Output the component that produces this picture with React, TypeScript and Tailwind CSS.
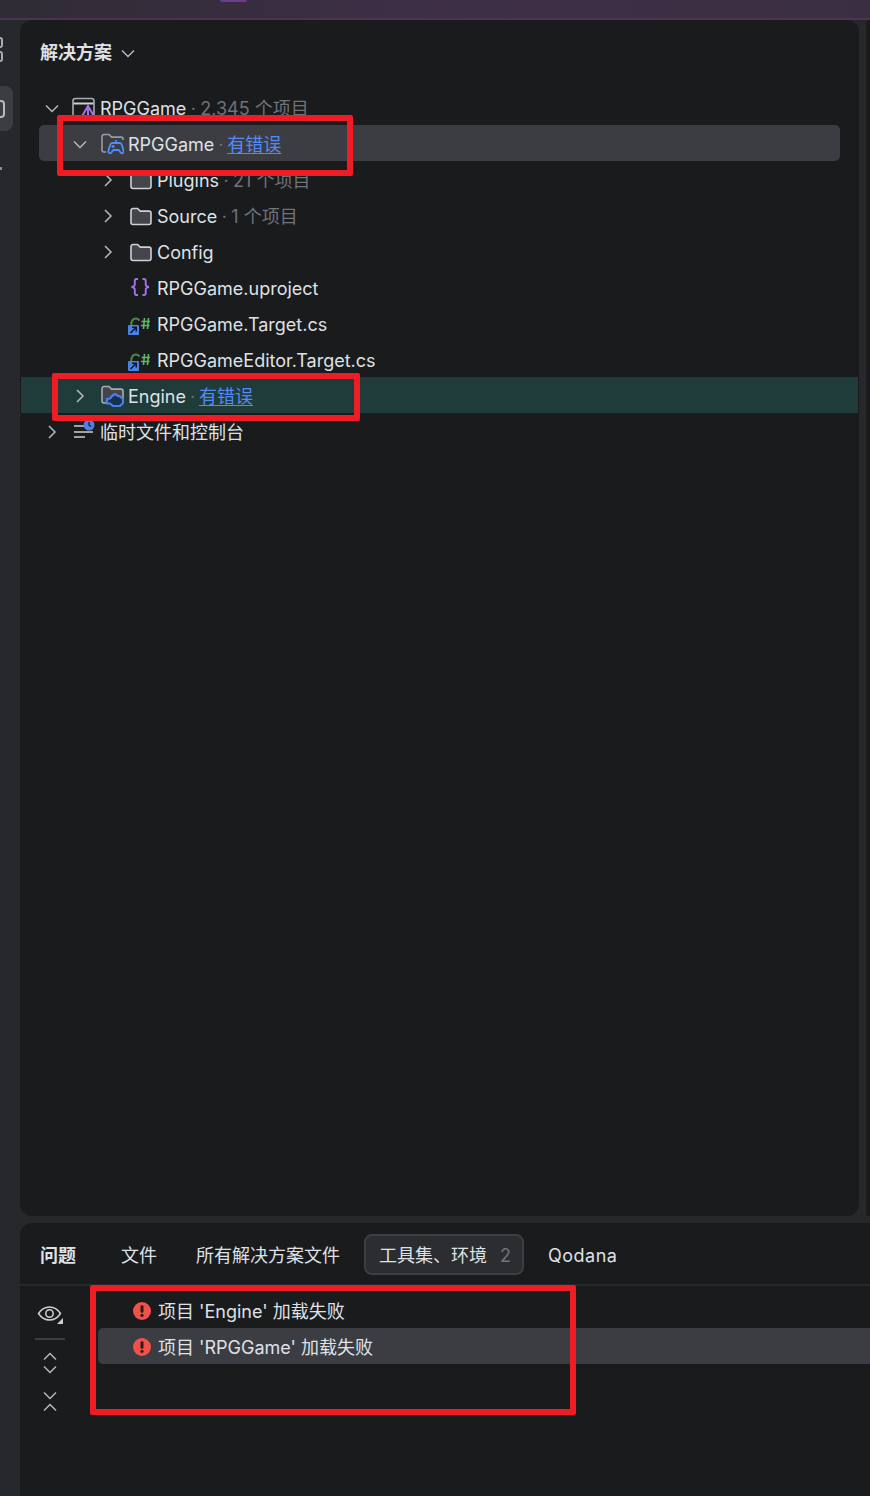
import React from "react";

const font = "font-['Inter','Noto_Sans_CJK_SC',sans-serif]";

const Chevron = ({ dir }: { dir: "down" | "right" | "up" }) => {
  const d = dir === "down" ? "M2 5.5l6 6 6-6" : dir === "up" ? "M2 10.5l6-6 6 6" : "M5 2l6 6-6 6";
  return (
    <svg width="16" height="16" viewBox="0 0 16 16" fill="none" stroke="#b4b8bf" strokeWidth="1.5" className="shrink-0">
      <path d={d} />
    </svg>
  );
};

const Folder = () => (
  <svg width="24" height="24" viewBox="0 0 24 24" fill="#43454a" stroke="#ced0d6" strokeWidth="1.6">
    <path d="M3 6.500a2 2 0 0 1 2-2h4.600l2.600 2.600H21a2 2 0 0 1 2 2v9.400a2 2 0 0 1-2 2H5a2 2 0 0 1-2-2z" />
  </svg>
);

const SolutionIcon = () => (
  <svg width="24" height="24" viewBox="0 0 24 24" fill="none">
    <rect x="1" y="2.500" width="21" height="19" rx="2.500" stroke="#a8abb2" strokeWidth="1.600" />
    <path d="M1.500 7.500h20" stroke="#ced0d6" strokeWidth="2" />
    <path d="M9 22l7-12 7 12M16 11v11" fill="#1a1b1d" stroke="#a571e6" strokeWidth="2" />
  </svg>
);

const GameFolder = () => (
  <svg width="24" height="24" viewBox="0 0 24 24" fill="none">
    <path d="M6 20H4a2 2 0 0 1-2-2V4.500a2 2 0 0 1 2-2h5l2.600 2.600H21a2 2 0 0 1 2 2V8" stroke="#9a9da4" strokeWidth="1.600" />
    <path
      d="M12.500 11h7a2.500 2.500 0 0 1 2.400 1.900l1.800 6.300c.4 1.700-1.700 2.700-2.900 1.400L18.500 18h-5l-2.300 2.600c-1.200 1.300-3.300.3-2.900-1.400l1.800-6.300A2.500 2.500 0 0 1 12.500 11zM16 8v3"
      fill="#3c3d43"
      stroke="#4f8cff"
      strokeWidth="1.800"
    />
    <path d="M11.500 14.500h3M13 13v3M19 13.500v.1M18 15.500v.1" stroke="#4f8cff" strokeWidth="1.400" />
  </svg>
);

const EngineFolder = () => (
  <svg width="24" height="24" viewBox="0 0 24 24" fill="none">
    <path d="M4 2.500h5l2.600 2.600H21a2 2 0 0 1 2 2V17a2 2 0 0 1-2 2H4a2 2 0 0 1-2-2V4.500a2 2 0 0 1 2-2z" fill="#43454a" stroke="#a8abb2" strokeWidth="1.600" />
    <path d="M12 12l3-2 3 2h1.500l3.500 3v4l-3 3h-7l-3-2.500H7v-4.500l3-.5z" fill="#17324a" stroke="#4a80ea" strokeWidth="2.200" />
  </svg>
);

const JsonIcon = () => (
  <svg width="24" height="24" viewBox="0 0 24 24" fill="none" stroke="#a571e6" strokeWidth="1.900">
    <path d="M10 3H8.500c-1 0-1.700.7-1.700 1.700V8.500c0 1.200-1 2.200-3.300 2.500 2.300.3 3.300 1.300 3.300 2.500v3.800c0 1 .7 1.700 1.700 1.700H10" />
    <path d="M14.500 3H16c1 0 1.700.7 1.700 1.700V8.500c0 1.200 1 2.200 3.300 2.500-2.300.3-3.300 1.300-3.300 2.500v3.800c0 1-.7 1.700-1.700 1.700h-1.500" />
  </svg>
);

const CsharpIcon = () => (
  <svg width="24" height="24" viewBox="0 0 24 24" fill="none">
    <path d="M11.500 8.500A4 4 0 0 0 8 6.500c-3 0-4.700 2.500-4.700 6.500" stroke="#4d8a52" strokeWidth="2" />
    <path d="M16.500 6l-1 11M20.500 6l-1 11M13.500 9.500h8.500M13 13.500h8.500" stroke="#5fb865" strokeWidth="1.600" />
    <rect x="0" y="13" width="11" height="10" rx="1" fill="#4a80ea" />
    <path d="M2.500 21l5.500-5.500M4 15.200h4.300v4.300" stroke="#14171c" strokeWidth="1.500" />
  </svg>
);

const ScratchIcon = () => (
  <svg width="24" height="24" viewBox="0 0 24 24" fill="none">
    <path d="M2 6h11M2 12h19M2 17h11" stroke="#ced0d6" strokeWidth="1.600" />
    <circle cx="17" cy="5" r="5.500" fill="#4a80ea" />
    <path d="M17 2v3.200l2 1.300" stroke="#14171c" strokeWidth="1.200" />
  </svg>
);

const ErrorIcon = () => (
  <svg width="18" height="18" viewBox="0 0 18 18" className="-mt-px shrink-0">
    <circle cx="9" cy="9" r="9" fill="#f0524a" />
    <rect x="7.500" y="3.200" width="3" height="7.600" rx="1.300" fill="#33191a" />
    <circle cx="9" cy="13.300" r="1.600" fill="#33191a" />
  </svg>
);

const Eye = () => (
  <svg width="26" height="24" viewBox="0 0 26 24" fill="none" stroke="#ced0d6" strokeWidth="1.500">
    <path d="M1.500 11.500C4.500 7 8.500 5 12.500 5s8 2 11 6.500c-3 4.500-7 6.500-11 6.500s-8-2-11-6.500z" />
    <circle cx="12.500" cy="11.500" r="3.700" />
    <path d="M26 16v6h-6z" fill="#ced0d6" stroke="none" />
  </svg>
);

type Row = {
  depth: 0 | 1 | 2;
  chevron?: "down" | "right";
  icon: React.ReactNode;
  name: string;
  meta?: string;
  error?: boolean;
  tone?: "selected" | "engine";
};

const rows: Row[] = [
  { depth: 0, chevron: "down", icon: <SolutionIcon />, name: "RPGGame", meta: "2,345 个项目" },
  { depth: 1, chevron: "down", icon: <GameFolder />, name: "RPGGame", error: true, tone: "selected" },
  { depth: 2, chevron: "right", icon: <Folder />, name: "Plugins", meta: "21 个项目" },
  { depth: 2, chevron: "right", icon: <Folder />, name: "Source", meta: "1 个项目" },
  { depth: 2, chevron: "right", icon: <Folder />, name: "Config" },
  { depth: 2, icon: <JsonIcon />, name: "RPGGame.uproject" },
  { depth: 2, icon: <CsharpIcon />, name: "RPGGame.Target.cs" },
  { depth: 2, icon: <CsharpIcon />, name: "RPGGameEditor.Target.cs" },
  { depth: 1, chevron: "right", icon: <EngineFolder />, name: "Engine", error: true, tone: "engine" },
  { depth: 0, chevron: "right", icon: <ScratchIcon />, name: "临时文件和控制台" },
];

const indent = { 0: "pl-[24px]", 1: "pl-[52px]", 2: "pl-[80px]" };

const rowClass = (row: Row) => {
  if (row.tone === "selected") return "mx-[19px] -mt-px mb-px h-9 rounded-[5px] bg-[#3c3d43] pl-[33px] pt-[2px]";
  if (row.tone === "engine") return "mx-px -mt-px mb-px h-9 bg-[#1f3b3a] pl-[51px] pt-[2px]";
  return `h-9 ${indent[row.depth]}`;
};

const TreeRow = ({ row }: { row: Row }) => (
  <div className={`flex items-center ${rowClass(row)}`}>
    <div className="w-4 shrink-0">{row.chevron && <Chevron dir={row.chevron} />}</div>
    <div className="ml-3 h-6 w-6 shrink-0">{row.icon}</div>
    <span className={`whitespace-nowrap text-[#dfe1e5] ${row.depth === 2 ? "ml-[5px]" : "ml-[4px]"}`}>{row.name}</span>
    {row.meta && (
      <>
        <span className="w-[14px] text-center text-[#6f737a]">·</span>
        <span className="whitespace-nowrap text-[#6f737a]">{row.meta}</span>
      </>
    )}
    {row.error && (
      <>
        <span className="w-[13px] text-center text-[#6f737a]">·</span>
        <span className="whitespace-nowrap text-[#548af7] underline underline-offset-2">有错误</span>
      </>
    )}
  </div>
);

const Problem = ({ text, selected }: { text: string; selected?: boolean }) => (
  <div className={`flex items-center pl-[35px] ${selected ? "-mt-px h-9 rounded-l-[5px] bg-[#3c3d43] pt-[2px]" : "h-9"}`}>
    <ErrorIcon />
    <span className="ml-[7px] whitespace-nowrap text-[#dfe1e5]">{text}</span>
  </div>
);

export default function App() {
  return (
    <div className={`relative flex h-[1496px] w-[870px] flex-col overflow-hidden bg-[#27282c] text-[18px] ${font}`}>
      {/* window title bar */}
      <div className="h-5 shrink-0 border-b-2 border-[#4a3450] bg-linear-to-r from-[#2f2c35] via-[#3e2f47] to-[#3a2e41] pl-[220px]">
        <div className="h-[2px] w-[27px] rounded-b bg-[#6b3d8e]" />
      </div>

      <div className="flex min-h-0 flex-1">
        {/* tool strip, cut off by the crop */}
        <div className="flex w-5 shrink-0 flex-col items-start">
          <div className="mt-[17px] flex flex-col gap-[3px]">
            <div className="h-[11px] w-[3px] rounded-r-sm border-2 border-l-0 border-[#a8abb2]" />
            <div className="h-[11px] w-[3px] rounded-r-sm border-2 border-l-0 border-[#a8abb2]" />
          </div>
          <div className="mt-[24px] flex h-[45px] w-[13px] items-center rounded-r-lg bg-[#3c3d43]">
            <div className="h-[18px] w-[5px] rounded-r-sm border-2 border-l-0 border-[#b4b8bf]" />
          </div>
          <div className="mt-9 h-[3px] w-[2px] bg-[#8a8d94]" />
        </div>

        <div className="flex min-w-0 flex-1 flex-col gap-[7px]">
          <div className="flex h-[1196px] shrink-0 gap-[7px]">
            {/* solution explorer */}
            <div className="w-[839px] shrink-0 rounded-xl bg-[#1a1b1d]">
              <div className="flex h-[70px] items-center pb-[5px] pl-5">
                <span className="font-bold text-[#dfe1e5]">解决方案</span>
                <div className="ml-2"><Chevron dir="down" /></div>
              </div>
              {rows.map((row, i) => (
                <TreeRow key={i} row={row} />
              ))}
            </div>
            <div className="flex-1 rounded-tl-xl bg-[#1a1b1d]" />
          </div>

          {/* problems panel */}
          <div className="min-h-0 flex-1 rounded-tl-xl bg-[#1a1b1d]">
            <div className="flex h-[63px] items-center border-b-2 border-[#27282c] pl-5 pt-[3px]">
              <span className="font-bold text-[#dfe1e5]">问题</span>
              <span className="ml-[45px] text-[#dfe1e5]">文件</span>
              <span className="ml-[39px] text-[#dfe1e5]">所有解决方案文件</span>
              <div className="ml-6 -mt-[1px] flex h-[41px] w-[160px] items-center rounded-lg border-2 border-[#3c3e43] bg-[#2b2d30] pl-[13px] pt-px">
                <span className="text-[#dfe1e5]">工具集、环境</span>
                <span className="ml-[13px] text-[#6f737a]">2</span>
              </div>
              <span className="ml-6 tracking-[0.5px] text-[#dfe1e5]">Qodana</span>
            </div>
            <div className="flex">
              <div className="flex w-[78px] shrink-0 flex-col pt-[16px] pr-[18px]">
                <div className="flex flex-col items-center">
                  <Eye />
                  <div className="mt-[12px] h-[2px] w-[30px] bg-[#3c3e43]" />
                  <div className="mt-[9px] flex flex-col">
                    <div className="-mb-[4px]"><Chevron dir="up" /></div>
                    <Chevron dir="down" />
                  </div>
                  <div className="mt-[10px] flex flex-col">
                    <div className="-mb-[3px]"><Chevron dir="down" /></div>
                    <Chevron dir="up" />
                  </div>
                </div>
              </div>
              <div className="min-w-0 flex-1 pt-[7px]">
                <Problem text="项目 'Engine' 加载失败" />
                <Problem text="项目 'RPGGame' 加载失败" selected />
              </div>
            </div>
          </div>
        </div>
      </div>

      {/* red annotations drawn over the screenshot */}
      <div className="absolute left-[57px] top-[115px] h-[61px] w-[296px] rounded-[2px] border-[6px] border-[#ee1c25]" />
      <div className="absolute left-[52px] top-[373px] h-[48px] w-[308px] rounded-[2px] border-[6px] border-[#ee1c25]" />
      <div className="absolute left-[90px] top-[1285px] h-[130px] w-[486px] rounded-[2px] border-[6px] border-[#ee1c25]" />
    </div>
  );
}
